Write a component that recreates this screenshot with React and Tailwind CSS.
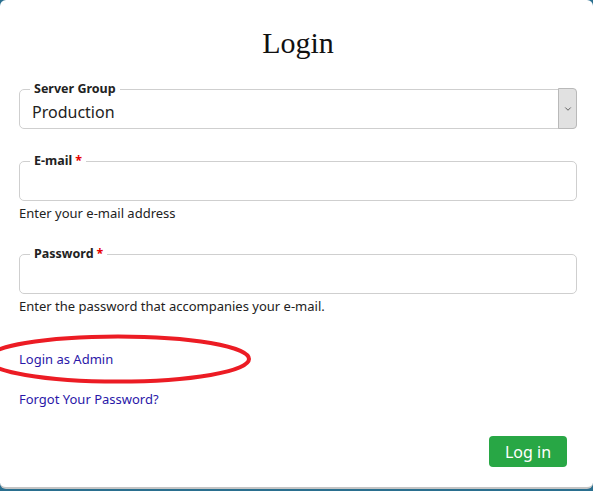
import { ChevronDown } from 'lucide-react';

function Field({ label, required, children, className = '' }) {
  return (
    <fieldset className={`relative rounded-[5px] border border-[#cfcfcf] pl-[12px] ${className}`}>
      <legend className="ml-[-2px] px-[4px] text-[12.5px] font-bold leading-[16px] text-[#222]">
        {label}
        {required && <span className="ml-[3px] text-[#e60000]">*</span>}
      </legend>
      <div className="flex h-[31px] items-center pb-[1px]">{children}</div>
    </fieldset>
  );
}

export default function App() {
  return (
    <div className="h-[491px] w-[593px] overflow-hidden bg-[#2a6f8f]" style={{ fontFamily: "'Noto Sans', 'Open Sans', sans-serif" }}>
      <div className="relative h-[489px] w-[593px] rounded-[6px] border-b-2 border-[#c4c4c4] bg-white pl-[19px] pr-[16px]">
        <h1 className="pt-[25px] text-center text-[30px] leading-[36px] text-[#111]" style={{ fontFamily: "'Liberation Serif', serif" }}>
          Login
        </h1>

        <Field label="Server Group" className="mt-[20px]">
          <span className="text-[16px] text-[#222]">Production</span>
          <div className="absolute top-[-9px] -right-px -bottom-px flex w-[19px] items-center justify-center rounded-r-[4px] border border-[#b9b9b9] bg-[#e1e1e1]">
            <ChevronDown size={10} strokeWidth={1.75} className="text-[#333]" />
          </div>
        </Field>

        <Field label="E-mail" required className="mt-[24px]" />
        <p className="mt-[3px] text-[13px] leading-[18px] text-[#222]">Enter your e-mail address</p>

        <Field label="Password" required className="mt-[24px]" />
        <p className="mt-[3px] text-[13px] leading-[18px] text-[#222]">Enter the password that accompanies your e-mail.</p>

        <div className="relative mt-[35px]">
          <a href="#" className="block text-[13px] leading-[18px] text-[#2a17a8]">Login as Admin</a>
          <svg className="pointer-events-none absolute left-[-19px] top-[-23px]" width="280" height="64" viewBox="0 0 280 64">
            <ellipse cx="118" cy="32" rx="131" ry="22.5" fill="none" stroke="#ec1c24" strokeWidth="4" />
          </svg>
        </div>

        <a href="#" className="mt-[22px] block text-[13px] leading-[18px] text-[#2a17a8]">Forgot Your Password?</a>

        <div className="mt-[28px] flex justify-end pr-[10px]">
          <button className="h-[31px] w-[78px] rounded-[4px] bg-[#28a745] text-[16px] text-white">Log in</button>
        </div>
      </div>
    </div>
  );
}
